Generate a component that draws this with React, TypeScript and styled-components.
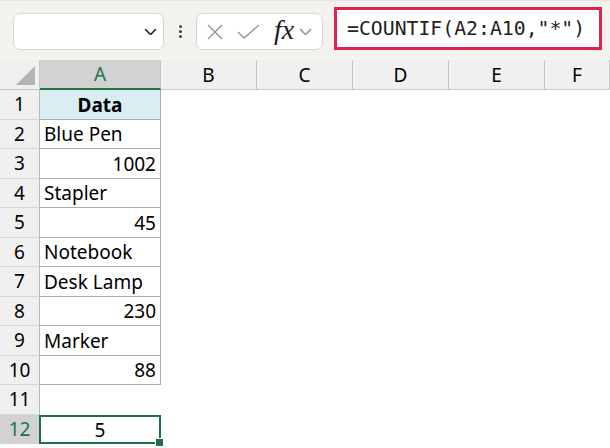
import React from "react";
import styled, { createGlobalStyle, css } from "styled-components";

const GlobalStyle = createGlobalStyle`
  html, body {
    margin: 0;
    padding: 0;
    background: #ffffff;
    overflow: hidden;
  }
  body {
    font-family: "Noto Sans", "Open Sans", sans-serif;
  }
`;

const GREEN = "#1e7145";

const Page = styled.div`
  width: 610px;
  height: 448px;
  display: flex;
  flex-direction: column;
  background: #ffffff;
`;

const Toolbar = styled.div`
  height: 60px;
  box-sizing: border-box;
  display: flex;
  align-items: flex-end;
  padding: 0 0 10px 13px;
  background: #f3f3ee;
  border-top: 1px solid #e6e6de;
`;

const NameBox = styled.div`
  width: 151px;
  height: 37px;
  box-sizing: border-box;
  background: #ffffff;
  border: 1px solid #d6d6d0;
  border-radius: 7px;
  display: flex;
  align-items: center;
  justify-content: flex-end;
  padding-right: 6px;
`;

const Dots = styled.div`
  width: 32px;
  height: 37px;
  display: flex;
  flex-direction: column;
  align-items: center;
  justify-content: center;
  gap: 2px;

  > span {
    width: 3px;
    height: 3px;
    border-radius: 50%;
    background: #444;
  }
`;

const FxButtons = styled.div`
  width: 127px;
  height: 37px;
  box-sizing: border-box;
  background: #ffffff;
  border: 1px solid #d6d6d0;
  border-radius: 7px;
  display: flex;
  align-items: center;
  padding: 0 4px 0 8px;
  gap: 11px;
`;

const FxLabel = styled.span`
  font-family: "Liberation Serif", "DejaVu Serif", serif;
  font-style: italic;
  font-size: 28px;
  color: #1a1a1a;
  line-height: 1;
  margin-left: 2px;
  margin-right: -6px;
  padding-bottom: 3px;
`;

const FormulaBox = styled.div`
  margin-left: 11px;
  width: 268px;
  height: 43px;
  box-sizing: border-box;
  border: 3px solid #e0234e;
  background: #ffffff;
  display: flex;
  align-items: center;
  padding-left: 10px;
  font-family: "DejaVu Sans Mono", "Liberation Mono", monospace;
  font-size: 19.8px;
  color: #222;
  white-space: nowrap;
`;

const Grid = styled.div`
  display: grid;
  grid-template-columns: 40px 121px repeat(4, 96px) 1fr;
  grid-template-rows: 30px repeat(12, 29.5px);
  font-size: 19px;
  color: #000;
`;

const Corner = styled.div`
  position: relative;
  background: #f0f0f0;
  border-right: 1px solid #c6c6c6;
  border-bottom: 1px solid #c6c6c6;
  box-sizing: border-box;
  display: flex;
  align-items: flex-end;
  justify-content: flex-end;
  padding: 0 4px 4px 0;

  &::after {
    content: "";
    width: 0;
    height: 0;
    border-style: solid;
    border-width: 0 0 19px 19px;
    border-color: transparent transparent #b4b4b4 transparent;
  }
`;

const ColHeader = styled.div<{ $active?: boolean }>`
  box-sizing: border-box;
  display: flex;
  align-items: center;
  justify-content: center;
  background: #f0f0f0;
  border-right: 1px solid #c6c6c6;
  border-bottom: 1px solid #c6c6c6;
  ${(p) =>
    p.$active &&
    css`
      background: #d2d2d2;
      color: ${GREEN};
      border-bottom: 2px solid ${GREEN};
    `}
`;

const RowHeader = styled.div<{ $active?: boolean }>`
  box-sizing: border-box;
  display: flex;
  align-items: center;
  justify-content: center;
  background: #f0f0f0;
  border-right: 1px solid #b8b8b8;
  border-bottom: 1px solid #d8d8d8;
  ${(p) =>
    p.$active &&
    css`
      background: #d2d2d2;
      color: ${GREEN};
    `}
`;

const Cell = styled.div<{
  $boxed?: boolean;
  $head?: boolean;
  $align?: "left" | "right" | "center";
  $selected?: boolean;
}>`
  position: relative;
  box-sizing: border-box;
  display: flex;
  align-items: center;
  padding: 1px 4px 0;
  white-space: nowrap;
  justify-content: ${(p) =>
    p.$align === "right" ? "flex-end" : p.$align === "center" ? "center" : "flex-start"};
  ${(p) =>
    p.$boxed &&
    css`
      border-right: 1px solid #ababab;
      border-bottom: 1px solid #ababab;
    `}
  ${(p) =>
    p.$head &&
    css`
      background: #daedf3;
      font-weight: 700;
    `}
  ${(p) =>
    p.$selected &&
    css`
      border: 2px solid ${GREEN};
      margin-left: -1px;
    `}
`;

const FillHandle = styled.span`
  position: absolute;
  right: -5px;
  bottom: -5px;
  width: 7px;
  height: 7px;
  background: ${GREEN};
  border: 1px solid #ffffff;
`;

const columns = ["A", "B", "C", "D", "E", "F"];

const rows: { value: string; align: "left" | "right" | "center" }[] = [
  { value: "Data", align: "center" },
  { value: "Blue Pen", align: "left" },
  { value: "1002", align: "right" },
  { value: "Stapler", align: "left" },
  { value: "45", align: "right" },
  { value: "Notebook", align: "left" },
  { value: "Desk Lamp", align: "left" },
  { value: "230", align: "right" },
  { value: "Marker", align: "left" },
  { value: "88", align: "right" },
  { value: "", align: "left" },
  { value: "5", align: "center" },
];

const Chevron = ({ color, size }: { color: string; size: number }) => (
  <svg width={size} height={size * 0.6} viewBox="0 0 12 7" fill="none">
    <polyline points="1,1 6,6 11,1" stroke={color} strokeWidth="1.5" />
  </svg>
);

export default function App() {
  return (
    <Page>
      <GlobalStyle />
      <Toolbar>
        <NameBox>
          <Chevron color="#333" size={13} />
        </NameBox>
        <Dots>
          <span />
          <span />
          <span />
        </Dots>
        <FxButtons>
          <svg width="20" height="20" viewBox="0 0 20 20" fill="none">
            <path d="M3 3 L17 17 M17 3 L3 17" stroke="#909090" strokeWidth="1.3" />
          </svg>
          <svg width="25" height="20" viewBox="0 0 25 20" fill="none">
            <polyline points="2,10 8,16 23,3" stroke="#909090" strokeWidth="1.3" />
          </svg>
          <FxLabel>fx</FxLabel>
          <Chevron color="#9a9a9a" size={13} />
        </FxButtons>
        <FormulaBox>=COUNTIF(A2:A10,"*")</FormulaBox>
      </Toolbar>
      <Grid>
        <Corner />
        {columns.map((c) => (
          <ColHeader key={c} $active={c === "A"}>
            {c}
          </ColHeader>
        ))}
        {rows.map((r, i) => {
          const n = i + 1;
          const selected = n === 12;
          return (
            <React.Fragment key={n}>
              <RowHeader $active={selected}>{n}</RowHeader>
              <Cell
                $boxed={n <= 10}
                $head={n === 1}
                $align={r.align}
                $selected={selected}
              >
                {r.value}
                {selected && <FillHandle />}
              </Cell>
              {columns.slice(1).map((c) => (
                <Cell key={c} />
              ))}
            </React.Fragment>
          );
        })}
      </Grid>
    </Page>
  );
}
